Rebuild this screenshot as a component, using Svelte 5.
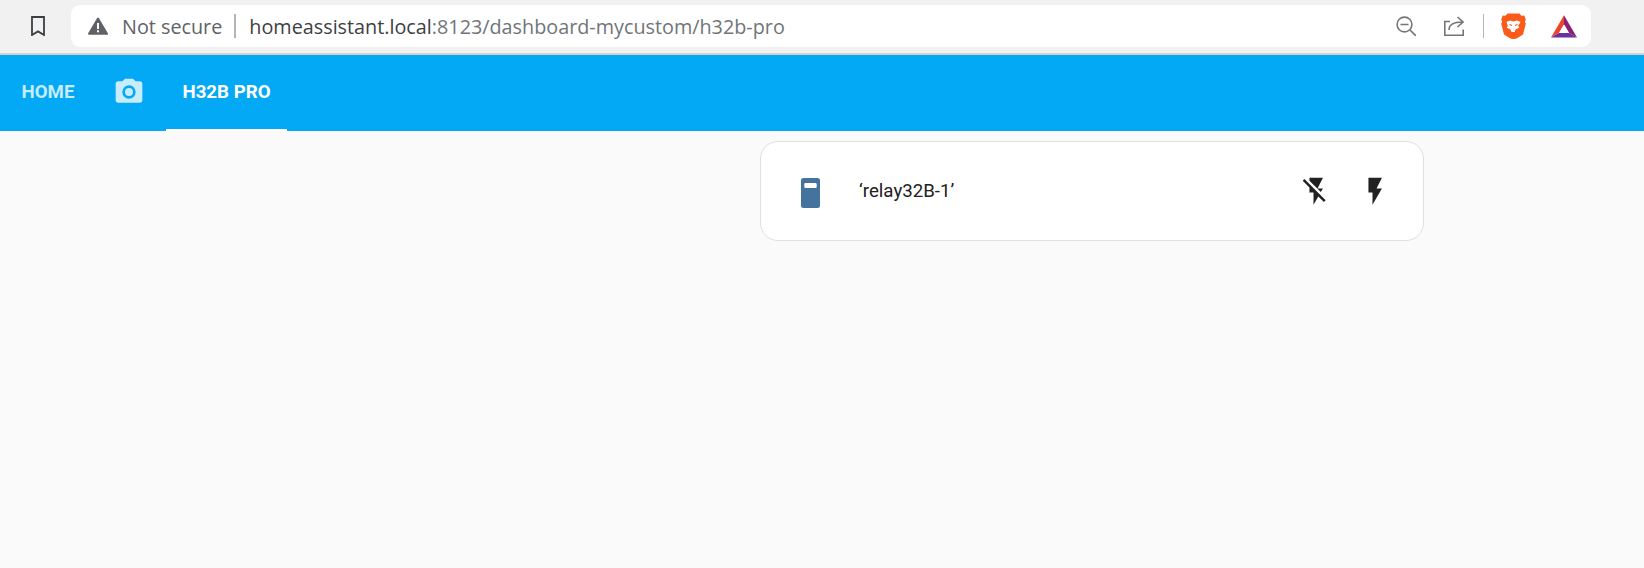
<script>
  const tabs = [
    { label: 'HOME' },
    { icon: true },
    { label: 'H32B PRO', active: true }
  ];
</script>

<div class="page">
  <div class="chrome">
    <svg class="bookmark" viewBox="0 0 14 20" width="14" height="20"><path d="M1 1h12v18l-6-3.600-6 3.600z" fill="none" stroke="#3c4043" stroke-width="1.800"/></svg>
    <div class="omnibox">
      <svg class="warn" viewBox="0 0 20 18" width="20" height="18"><path d="M10 1.500 19 16.800H1z" fill="#5f6368" stroke="#5f6368" stroke-width="2" stroke-linejoin="round"/><rect x="9" y="6" width="2" height="6" fill="#fff"/><rect x="9" y="13.300" width="2" height="2" fill="#fff"/></svg>
      <span class="secure">Not secure</span>
      <span class="sep"></span>
      <span class="url"><span class="host">homeassistant.local</span>:8123/dashboard-mycustom/h32b-pro</span>
      <span class="spacer"></span>
      <svg class="zoomicon" viewBox="0 0 20 20" width="20" height="20"><circle cx="8.500" cy="8.500" r="7.400" fill="none" stroke="#757575" stroke-width="1.600"/><path d="M4.500 8.500h8M14 14l6 6" stroke="#757575" stroke-width="1.600" fill="none"/></svg>
      <svg class="share" viewBox="0 0 20 20" width="20" height="20"><path d="M6 5.500H.8v13.700h18.400V13.500" fill="none" stroke="#757575" stroke-width="1.600"/><path d="M5 14c0-5 4-8 13.500-8M13.500 1l5.500 5-5.500 5" fill="none" stroke="#757575" stroke-width="1.600"/></svg>
      <span class="sep small"></span>
      <svg class="brave" viewBox="0 0 25 26" width="25" height="26"><path d="M6.500 0.500h12l2 2.300 2.800-.4L24.800 6.500l-1 2.300 1 2-2.800 10.700-6 3.700-3.500 1.300-3.500-1.300-6-3.700L.2 10.800l1-2-1-2.300L1.700 2.400l2.800.4z" fill="#fb5a1b"/><path d="M5.500 9 9 7.500l3.500 1 3.500-1L19.500 9l-2.300 3.800 1 2-3.700 1.700-1 2.500h-3l-1-2.500-3.700-1.700 1-2z" fill="#fff"/><path d="M8.500 11.500l2.500 1M16.500 11.500l-2.500 1M10.500 20.500h4l-2 1.700z" stroke="#fb5a1b" stroke-width="1.200" fill="#fb5a1b"/></svg>
      <svg class="bat" viewBox="0 0 26 23" width="26" height="23"><path d="M13 .3 0 22.500l8-4.500 5-8.500z" fill="#f0432c"/><path d="M13 .3 26 22.500l-8-4.500-5-8.500z" fill="#8a1f73"/><path d="M0 22.500h26L18 18H8z" fill="#6b2f9e"/><path d="M13 9.500l5 8.500H8z" fill="#fff"/></svg>
    </div>
  </div>
  <header class="toolbar">
    {#each tabs as tab}
      <div class="tab" class:active={tab.active} class:iconTab={tab.icon}>
        {#if tab.icon}
          <svg viewBox="0 0 24 24" width="32" height="32"><path fill="currentColor" d="M4,4H7L9,2H15L17,4H20A2,2 0 0,1 22,6V18A2,2 0 0,1 20,20H4A2,2 0 0,1 2,18V6A2,2 0 0,1 4,4M12,7A5,5 0 0,0 7,12A5,5 0 0,0 12,17A5,5 0 0,0 17,12A5,5 0 0,0 12,7M12,9A3,3 0 0,1 15,12A3,3 0 0,1 12,15A3,3 0 0,1 9,12A3,3 0 0,1 12,9Z"/></svg>
        {:else}
          {tab.label}
        {/if}
      </div>
    {/each}
  </header>
  <main class="content">
    <section class="card">
      <svg class="relay" viewBox="0 0 19 30" width="19" height="30"><path fill-rule="evenodd" fill="#44739e" d="M2.500 0h14A2.500 2.500 0 0 1 19 2.500v25a2.500 2.500 0 0 1-2.500 2.500h-14A2.500 2.500 0 0 1 0 27.500v-25A2.500 2.500 0 0 1 2.500 0zM4.500 5a1.200 1.200 0 0 0-1.200 1.200v2.600a1.200 1.200 0 0 0 1.200 1.200h10a1.200 1.200 0 0 0 1.200-1.200V6.200a1.200 1.200 0 0 0-1.200-1.200z"/></svg>
      <span class="name">‘relay32B-1’</span>
      <span class="spacer"></span>
      <svg class="off" viewBox="0 0 24 24" width="32.400" height="32.400"><path fill="#212121" d="M17,10H13L17,2H7V4.180L15.460,12.640M3.270,3L2,4.270L7,9.270V13H10V22L13.580,15.860L17.730,20L19,18.730L3.270,3Z"/></svg>
      <svg class="on" viewBox="0 0 24 24" width="32.400" height="32.400"><path fill="#212121" d="M7,2V13H10V22L17,10H13L17,2H7Z"/></svg>
    </section>
  </main>
</div>

<style>
  :global(body) { margin: 0; background: #fafafa; }
  .page { height: 568px; display: flex; flex-direction: column; overflow: hidden; }
  .chrome {
    height: 53px; background: #f1f1f1; border-bottom: 2px solid #d2d2d2;
    display: flex; align-items: flex-start; box-sizing: content-box; padding-left: 31px;
  }
  .bookmark { margin: 16px 26px 0 0; flex: none; }
  .omnibox {
    margin-top: 5px;
    width: 1520px; height: 42px; background: #fff; border-radius: 9px;
    display: flex; align-items: center; padding: 0 14px 0 17px; box-sizing: border-box;
    font-family: "Open Sans", sans-serif; font-size: 19.800px; color: #5f6368; white-space: nowrap;
  }
  .warn { margin-right: 14px; flex: none; }
  .secure { color: #5f6368; }
  .sep { width: 2px; height: 24px; background: #b5b5b5; margin: 0 13px 0 12px; flex: none; }
  .url { color: #70757a; }
  .host { color: #3c4043; }
  .spacer { flex: 1; }
  .zoomicon { margin-right: 28px; flex: none; }
  .share { margin-right: 19px; flex: none; }
  .sep.small { width: 1px; margin: 0 17px 0 0; }
  .brave { margin-right: 25px; flex: none; }
  .bat { flex: none; }
  .toolbar {
    height: 76px; background: #03a9f4; display: flex; color: #fff;
    font-family: Roboto, sans-serif; font-weight: 700; font-size: 18.700px; padding-left: 5px;
  }
  .tab { padding: 0 16.500px; display: flex; align-items: center; color: rgba(255,255,255,.78); border-bottom: 2px solid transparent; box-sizing: border-box; height: 76px; }
  .tab.iconTab { padding: 0 21px 0 22px; }
  .tab.active { color: #fff; border-bottom-color: #fff; }
  .content { flex: 1; padding: 10px 220px 0 760px; }
  .card {
    height: 100px; box-sizing: border-box; background: #fff; border: 1px solid #e0e0e0; border-radius: 18px;
    display: flex; align-items: center; padding: 0 32px 0 40px;
    font-family: Roboto, sans-serif; font-size: 18.700px; color: #212121;
  }
  .relay { margin: 3px 39px 0 0; flex: none; }
  .name { margin-top: -1px; }
  .off { margin-right: 26px; flex: none; }
  .on { flex: none; }
</style>
